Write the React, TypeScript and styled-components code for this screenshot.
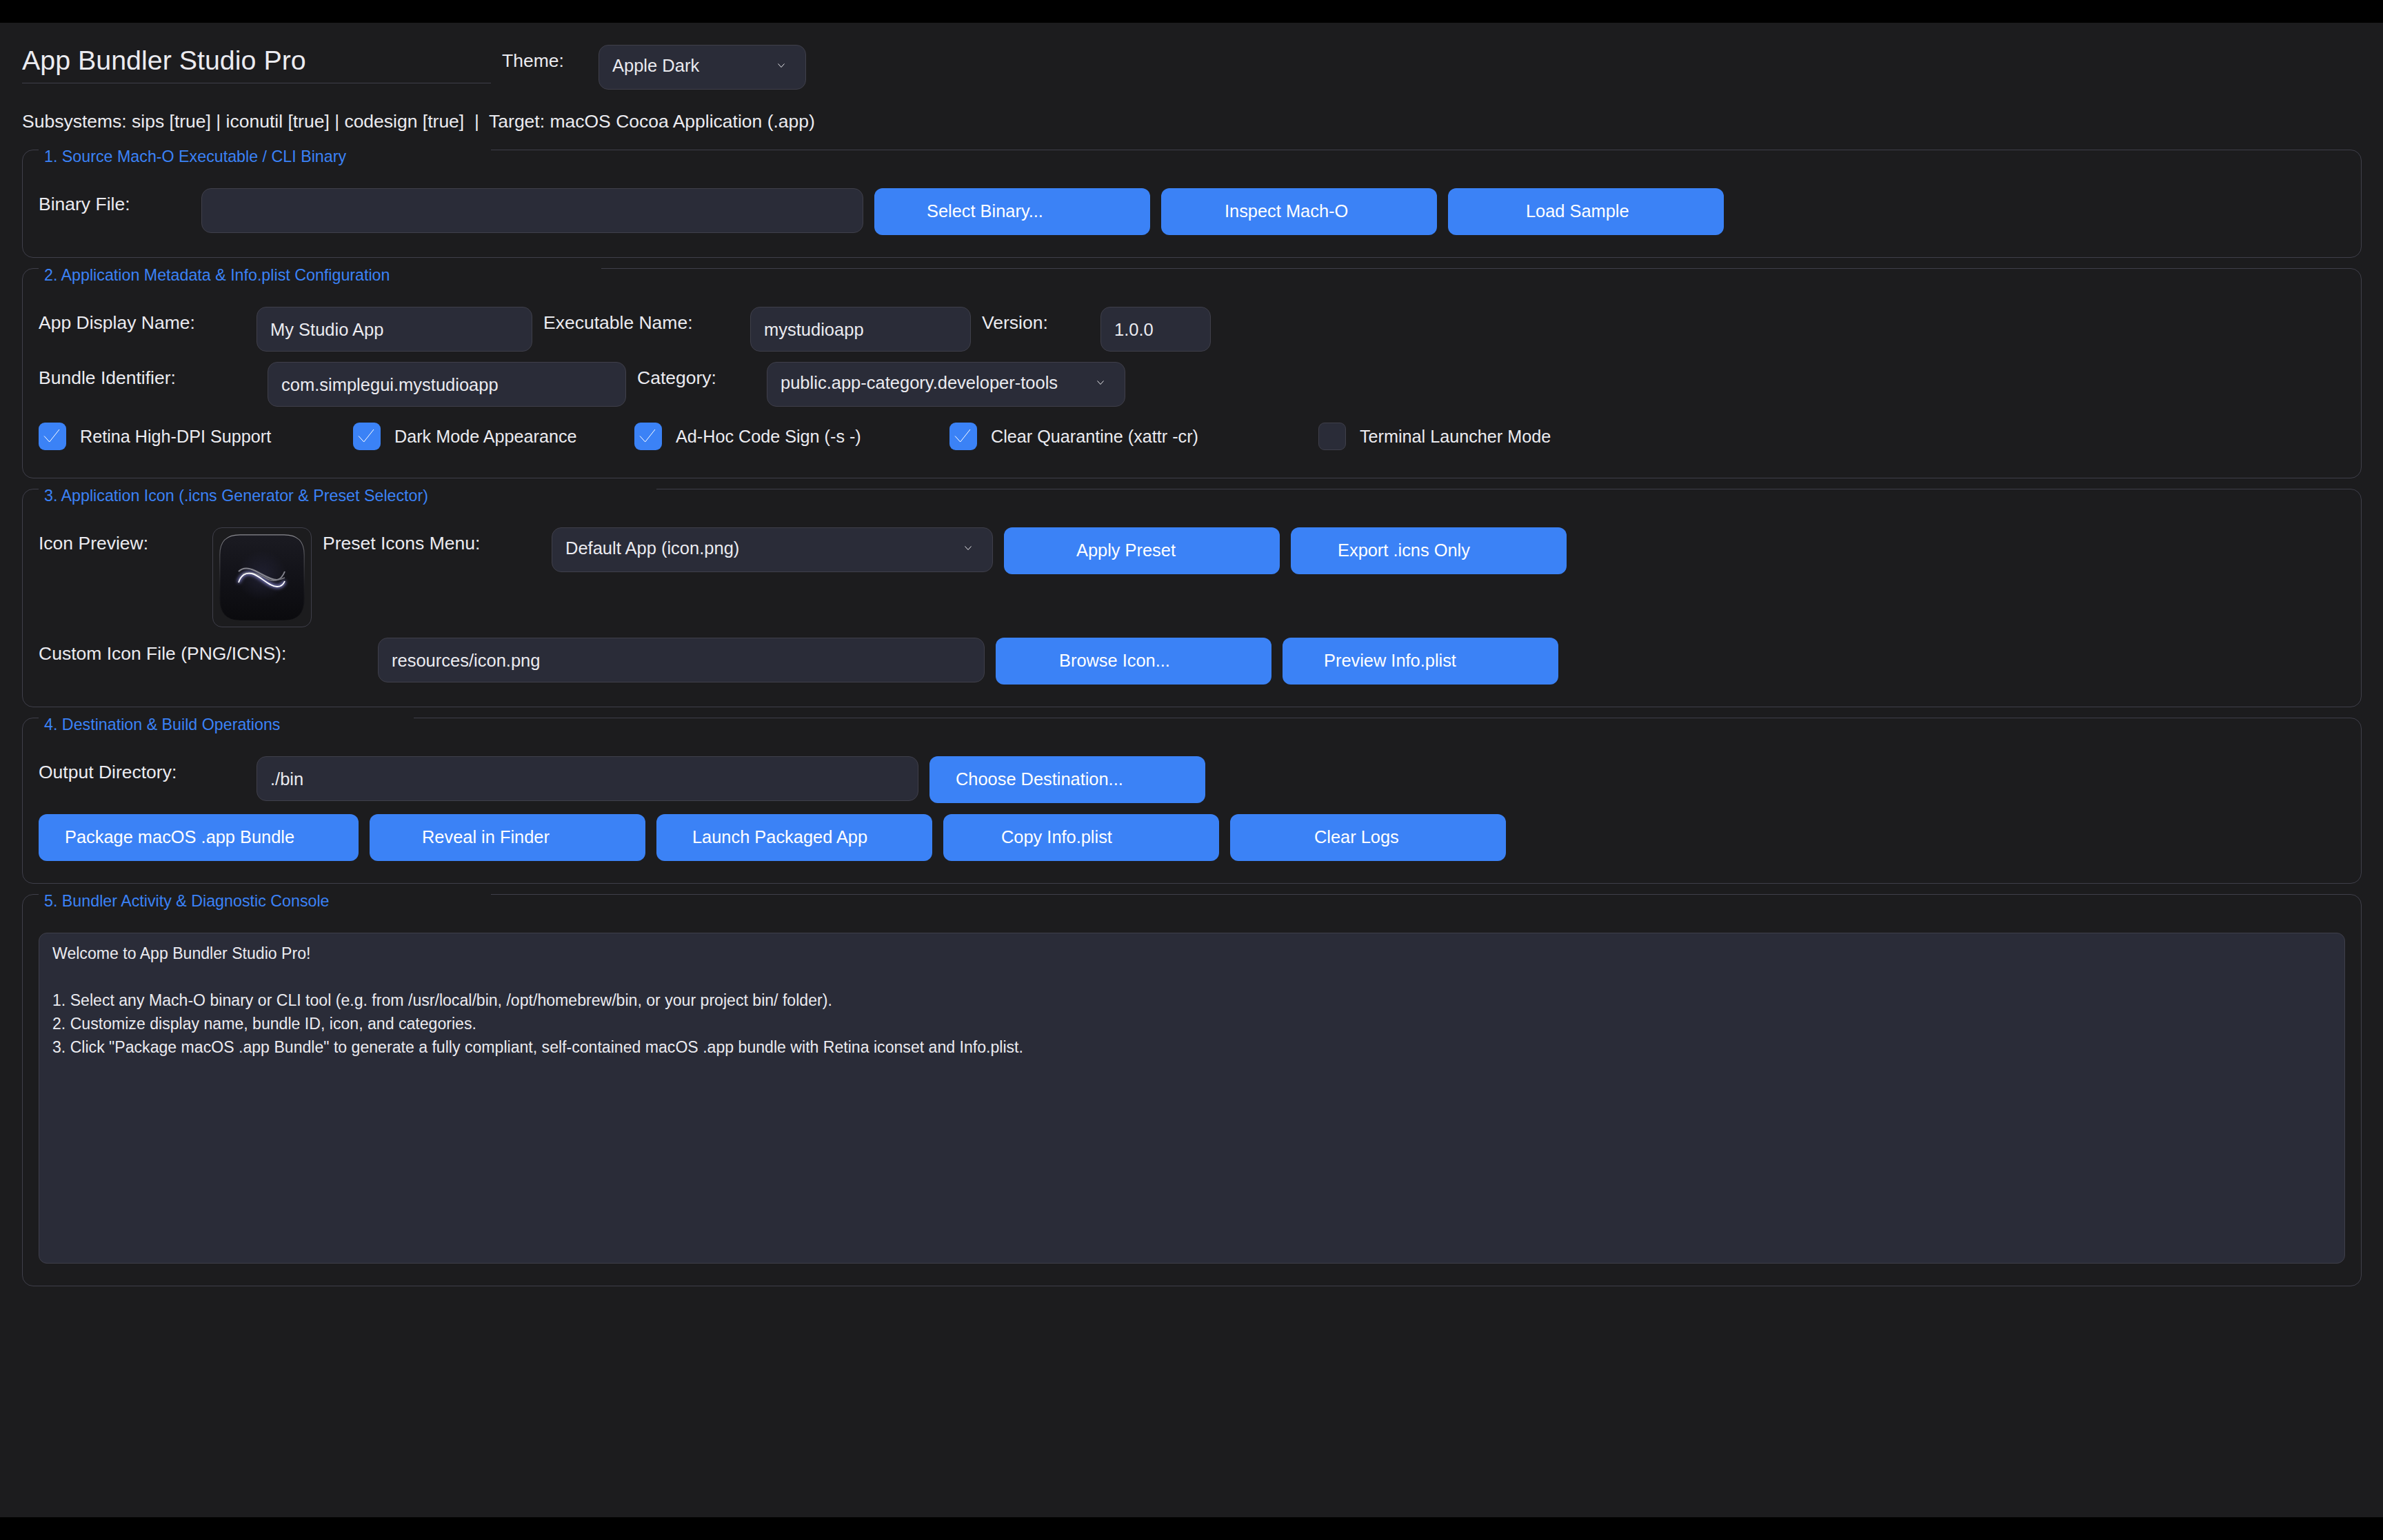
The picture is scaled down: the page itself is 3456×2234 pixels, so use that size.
import React from "react";
import styled, { createGlobalStyle } from "styled-components";

const Global = createGlobalStyle`
  html, body { margin: 0; padding: 0; background: #000; }
  * { box-sizing: border-box; }
`;

const Page = styled.div`
  width: 3456px;
  height: 2234px;
  padding: 33px 0;
  background: #000;
  overflow: hidden;
  font-family: "Liberation Sans", Arial, sans-serif;
  color: #ebebf0;
`;

const Shell = styled.main`
  height: 2168px;
  padding: 32px 31px 0 32px;
  background: #1c1c1e;
`;

const Header = styled.header`
  display: flex;
  align-items: flex-start;
  gap: 16px;
  height: 65px;
`;

const Title = styled.h1`
  width: 680px;
  height: 56px;
  margin: 0;
  padding-top: 0;
  border-bottom: 1px solid #3f3f4a;
  font-size: 39.4px;
  line-height: 45px;
  font-weight: 400;
`;

const Status = styled.p`
  margin: 31px 0 26px;
  font-size: 26.5px;
  line-height: 30px;
  white-space: pre;
`;

const Section = styled.section`
  position: relative;
  margin-bottom: 15px;
  padding: 55px 23px 32px;
  border: 1px solid #3f3f4a;
  border-radius: 16px;
`;

const Legend = styled.h2<{ $chars: number }>`
  position: absolute;
  top: -1px;
  left: 23px;
  width: ${(p) => p.$chars * 16 + 16}px;
  height: 18px;
  margin: 0;
  padding: 0 8px;
  background: linear-gradient(#1c1c1e 0 3px, transparent 3px);
  color: #3b82f6;
  font-size: 23.25px;
  line-height: 20px;
  font-weight: 400;
  white-space: nowrap;
`;

const Row = styled.div<{ $gap?: number }>`
  display: flex;
  align-items: flex-start;
  gap: 16px;
  margin-top: ${(p) => p.$gap ?? 0}px;
`;

const Label = styled.label<{ $w?: number }>`
  flex: none;
  width: ${(p) => (p.$w ? `${p.$w}px` : "auto")};
  padding-top: 8px;
  font-size: 26.5px;
  line-height: 30px;
  white-space: nowrap;
`;

const Field = styled.div<{ $w: number }>`
  flex: none;
  display: flex;
  align-items: center;
  width: ${(p) => p.$w}px;
  height: 65px;
  padding: 0 19px;
  background: #2a2c38;
  border: 1px solid #3f3f4a;
  border-radius: 14px;
  font-size: 25.5px;
  line-height: 30px;
  white-space: nowrap;
`;

const SelectBox = styled(Field)`
  justify-content: space-between;
  padding: 0 30px 6px 19px;
`;

const Chevron = () => (
  <svg width="10" height="6" viewBox="0 0 10 6" fill="none">
    <path d="M0.5 0.5 L5 5.5 L9.5 0.5" stroke="#e8e8ec" strokeWidth="1" />
  </svg>
);

const Button = styled.button<{ $w?: number; $inset: number }>`
  flex: none;
  width: ${(p) => p.$w ?? 400}px;
  height: 68px;
  padding: 0 0 2px ${(p) => p.$inset}px;
  background: #3b82f6;
  border: 0;
  border-radius: 12px;
  color: #fff;
  font-family: inherit;
  font-size: 25.4px;
  line-height: 30px;
  text-align: left;
  white-space: nowrap;
`;

const CheckRow = styled.div`
  display: flex;
  height: 48px;
  margin-top: 23px;
  gap: 16px;
`;

const CheckItem = styled.label<{ $w: number }>`
  flex: none;
  display: flex;
  gap: 20px;
  width: ${(p) => p.$w}px;
  font-size: 25.2px;
  line-height: 40px;
  white-space: nowrap;
`;

const Box = styled.span<{ $on: boolean }>`
  flex: none;
  display: block;
  width: 40px;
  height: 40px;
  background: ${(p) => (p.$on ? "#3b82f6" : "#2a2c38")};
  border: ${(p) => (p.$on ? "0" : "1px solid #3f3f4a")};
  border-radius: 9px;
`;

const Tick = () => (
  <svg width="40" height="40" viewBox="0 0 40 40" fill="none">
    <path d="M8 19.5 L15.7 28 L30 10" stroke="#fff" strokeWidth="1" />
  </svg>
);

const Preview = styled.div`
  flex: none;
  display: flex;
  align-items: center;
  justify-content: center;
  width: 144px;
  height: 145px;
  border: 1px solid #3f3f4a;
  border-radius: 14px;
`;

const AppIcon = () => (
  <svg width="124" height="125" viewBox="0 0 124 125">
    <defs>
      <linearGradient id="iconBg" x1="0" y1="0" x2="0" y2="1">
        <stop offset="0" stopColor="#1b1b22" />
        <stop offset="0.5" stopColor="#121218" />
        <stop offset="1" stopColor="#0b0b0e" />
      </linearGradient>
      <linearGradient id="iconEdge" x1="0" y1="0" x2="0" y2="1">
        <stop offset="0" stopColor="#8c8c92" />
        <stop offset="0.25" stopColor="#4a4a50" />
        <stop offset="0.6" stopColor="#1e1e22" />
        <stop offset="1" stopColor="#0b0b0e" />
      </linearGradient>
      <radialGradient id="iconHalo" cx="0.5" cy="0.48" r="0.35">
        <stop offset="0" stopColor="#2a2a44" stopOpacity="0.55" />
        <stop offset="1" stopColor="#2a2a44" stopOpacity="0" />
      </radialGradient>
      <filter id="waveGlow" x="-30%" y="-60%" width="160%" height="220%">
        <feGaussianBlur stdDeviation="2.4" />
      </filter>
    </defs>
    <path
      d="M30 .8 H94 C114 .8 123.2 10 123.2 30 V92 C123.2 114 114 124.2 94 124.2 H30 C10 124.2 .8 114 .8 92 V30 C.8 10 10 .8 30 .8 Z"
      fill="url(#iconBg)"
      stroke="url(#iconEdge)"
      strokeWidth="1.2"
    />
    <rect x="10" y="10" width="104" height="104" fill="url(#iconHalo)" />
    <path d="M28 70 C31 60 38 55 47 57 C60 60 70 75 84 76 C89 76 93 73 95 68" fill="none" stroke="#8f8fe0" strokeWidth="4" filter="url(#waveGlow)" />
    <path d="M28 54 C34 48 42 48 52 53 C64 59 76 67 84 66 C90 65 93 59 95 54" fill="none" stroke="#85858e" strokeWidth="2" />
    <path d="M34 58 C46 52 60 60 72 66 C80 69 88 66 95 63" fill="none" stroke="#77777f" strokeWidth="1.6" />
    <path d="M28 70 C31 60 38 55 47 57 C60 60 70 75 84 76 C89 76 93 73 95 68" fill="none" stroke="#fff" strokeWidth="1.8" />
  </svg>
);

const Console = styled.pre`
  height: 480px;
  margin: 0;
  padding: 12px 19px;
  background: #2a2c38;
  border: 1px solid #3f3f4a;
  border-radius: 12px;
  font-family: inherit;
  font-size: 23.1px;
  line-height: 34px;
  white-space: pre-wrap;
`;

const consoleText = `Welcome to App Bundler Studio Pro!

1. Select any Mach-O binary or CLI tool (e.g. from /usr/local/bin, /opt/homebrew/bin, or your project bin/ folder).
2. Customize display name, bundle ID, icon, and categories.
3. Click "Package macOS .app Bundle" to generate a fully compliant, self-contained macOS .app bundle with Retina iconset and Info.plist.`;

const legend = (text: string) => <Legend $chars={text.length}>{text}</Legend>;

export default function App() {
  return (
    <Page>
      <Global />
      <Shell>
        <Header>
          <Title>App Bundler Studio Pro</Title>
          <Label $w={124}>Theme:</Label>
          <SelectBox $w={301}>
            Apple Dark
            <Chevron />
          </SelectBox>
        </Header>
        <Status>{"Subsystems: sips [true] | iconutil [true] | codesign [true]  |  Target: macOS Cocoa Application (.app)"}</Status>

        <Section>
          {legend("1. Source Mach-O Executable / CLI Binary")}
          <Row>
            <Label $w={220}>Binary File:</Label>
            <Field $w={960} />
            <Button $inset={76}>Select Binary...</Button>
            <Button $inset={92}>Inspect Mach-O</Button>
            <Button $inset={113}>Load Sample</Button>
          </Row>
        </Section>

        <Section>
          {legend("2. Application Metadata & Info.plist Configuration")}
          <Row>
            <Label $w={300}>App Display Name:</Label>
            <Field $w={400}>My Studio App</Field>
            <Label $w={284}>Executable Name:</Label>
            <Field $w={320}>mystudioapp</Field>
            <Label $w={156}>Version:</Label>
            <Field $w={160}>1.0.0</Field>
          </Row>
          <Row $gap={15}>
            <Label $w={316}>Bundle Identifier:</Label>
            <Field $w={520}>com.simplegui.mystudioapp</Field>
            <Label $w={172}>Category:</Label>
            <SelectBox $w={520}>
              public.app-category.developer-tools
              <Chevron />
            </SelectBox>
          </Row>
          <CheckRow>
            <CheckItem $w={440}><Box $on><Tick /></Box>Retina High-DPI Support</CheckItem>
            <CheckItem $w={392}><Box $on><Tick /></Box>Dark Mode Appearance</CheckItem>
            <CheckItem $w={441}><Box $on><Tick /></Box>Ad-Hoc Code Sign (-s -)</CheckItem>
            <CheckItem $w={519}><Box $on><Tick /></Box>Clear Quarantine (xattr -cr)</CheckItem>
            <CheckItem $w={500}><Box $on={false} />Terminal Launcher Mode</CheckItem>
          </CheckRow>
        </Section>

        <Section>
          {legend("3. Application Icon (.icns Generator & Preset Selector)")}
          <Row>
            <Label $w={236}>Icon Preview:</Label>
            <Preview><AppIcon /></Preview>
            <Label $w={316}>Preset Icons Menu:</Label>
            <SelectBox $w={640}>
              Default App (icon.png)
              <Chevron />
            </SelectBox>
            <Button $inset={105}>Apply Preset</Button>
            <Button $inset={68}>Export .icns Only</Button>
          </Row>
          <Row $gap={15}>
            <Label $w={476}>Custom Icon File (PNG/ICNS):</Label>
            <Field $w={880}>resources/icon.png</Field>
            <Button $inset={92}>Browse Icon...</Button>
            <Button $inset={60}>Preview Info.plist</Button>
          </Row>
        </Section>

        <Section>
          {legend("4. Destination & Build Operations")}
          <Row>
            <Label $w={300}>Output Directory:</Label>
            <Field $w={960}>./bin</Field>
            <Button $inset={38}>Choose Destination...</Button>
          </Row>
          <Row $gap={16}>
            <Button $w={464} $inset={38}>Package macOS .app Bundle</Button>
            <Button $inset={76}>Reveal in Finder</Button>
            <Button $inset={52}>Launch Packaged App</Button>
            <Button $inset={84}>Copy Info.plist</Button>
            <Button $inset={122}>Clear Logs</Button>
          </Row>
        </Section>

        <Section>
          {legend("5. Bundler Activity & Diagnostic Console")}
          <Console>{consoleText}</Console>
        </Section>
      </Shell>
    </Page>
  );
}
